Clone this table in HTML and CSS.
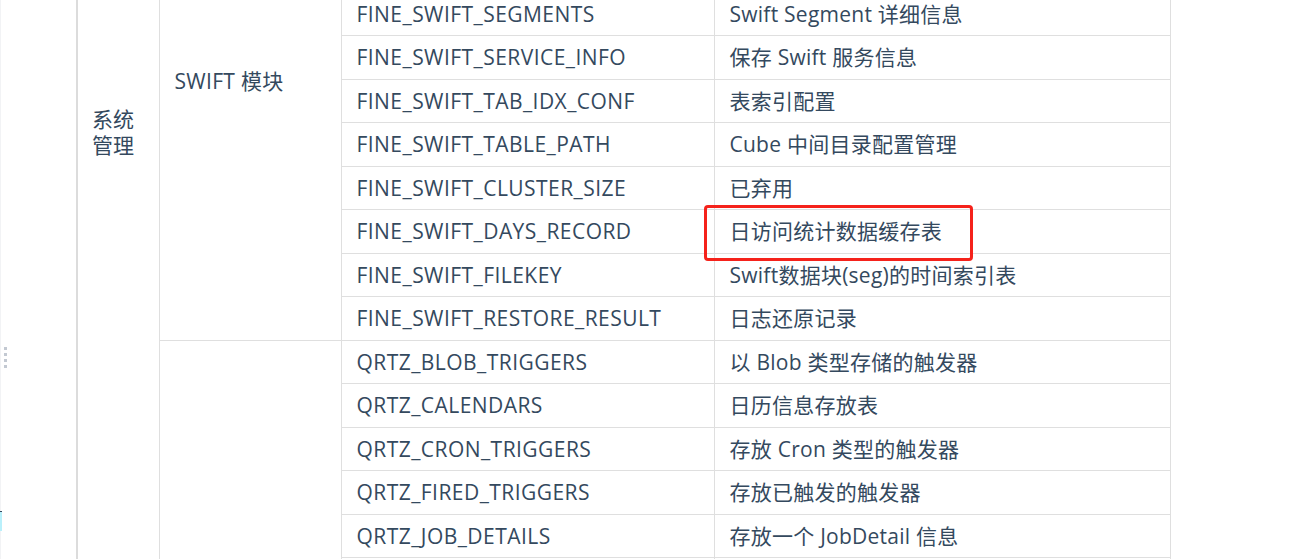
FILE: index.html
```html
<!DOCTYPE html>
<html lang="zh-CN">
<head>
  <meta charset="UTF-8">
  <title>系统管理 – 数据表说明</title>
  <link rel="stylesheet" href="styles.css">
</head>
<body>
  <div class="page">
    <div class="side-edge">
      <span class="resize-handle"><i></i><i></i><i></i><i></i></span>
      <span class="caret-mark"></span>
    </div>
    <div class="content">
      <table class="doc-table">
        <colgroup>
          <col class="c-group">
          <col class="c-module">
          <col class="c-name">
          <col class="c-desc">
        </colgroup>
        <tbody>
          <tr>
            <td class="span-cell group-cell" rowspan="14">系统管理</td>
            <td class="span-cell module-cell" rowspan="8">SWIFT 模块</td>
            <td class="name">FINE_SWIFT_SEGMENTS</td>
            <td class="desc">Swift Segment 详细信息</td>
          </tr>
          <tr><td class="name">FINE_SWIFT_SERVICE_INFO</td><td class="desc">保存 Swift 服务信息</td></tr>
          <tr><td class="name">FINE_SWIFT_TAB_IDX_CONF</td><td class="desc">表索引配置</td></tr>
          <tr><td class="name">FINE_SWIFT_TABLE_PATH</td><td class="desc">Cube 中间目录配置管理</td></tr>
          <tr><td class="name">FINE_SWIFT_CLUSTER_SIZE</td><td class="desc">已弃用</td></tr>
          <tr><td class="name">FINE_SWIFT_DAYS_RECORD</td><td class="desc marked">日访问统计数据缓存表</td></tr>
          <tr><td class="name">FINE_SWIFT_FILEKEY</td><td class="desc">Swift数据块(seg)的时间索引表</td></tr>
          <tr><td class="name">FINE_SWIFT_RESTORE_RESULT</td><td class="desc">日志还原记录</td></tr>
          <tr>
            <td class="span-cell" rowspan="6"></td>
            <td class="name">QRTZ_BLOB_TRIGGERS</td>
            <td class="desc">以 Blob 类型存储的触发器</td>
          </tr>
          <tr><td class="name">QRTZ_CALENDARS</td><td class="desc">日历信息存放表</td></tr>
          <tr><td class="name">QRTZ_CRON_TRIGGERS</td><td class="desc">存放 Cron 类型的触发器</td></tr>
          <tr><td class="name">QRTZ_FIRED_TRIGGERS</td><td class="desc">存放已触发的触发器</td></tr>
          <tr><td class="name">QRTZ_JOB_DETAILS</td><td class="desc">存放一个 JobDetail 信息</td></tr>
          <tr><td class="name"></td><td class="desc"></td></tr>
        </tbody>
      </table>
    </div>
  </div>
</body>
</html>
```

FILE: styles.css
```css
html, body {
  margin: 0;
  height: 100%;
  overflow: hidden;
  background: #fff;
}
body {
  font-family: "Open Sans", "Noto Sans CJK SC", sans-serif;
  font-size: 21px;
  color: #34495e;
}
.page {
  display: flex;
  height: 100%;
}
.side-edge {
  width: 1px;
  flex: none;
  background: #f2f3f5;
  position: relative;
}
.resize-handle {
  position: absolute; left: 4px; top: 347px;
  display: flex; flex-direction: column; gap: 3px;
}
.resize-handle i {
  display: block; width: 3px; height: 3px;
  background: #c3c9d2;
}
.caret-mark {
  position: absolute; left: 0; top: 511px;
  width: 2px; height: 19px;
  border-top: 1px solid #34495e;
  background: #b9f0fb;
}
.content {
  flex: 1;
  padding-left: 75px;
}
.doc-table {
  border-collapse: collapse;
  table-layout: fixed;
  width: 1093px;
  margin-top: -8.5px; /* page is scrolled */
  line-height: 26px;
}
.c-group  { width: 82px; }
.c-module { width: 182px; }
.c-name   { width: 373px; }
.c-desc   { width: 456px; }
.doc-table tr { height: 43.5px; }
.doc-table td {
  border: 1px solid #dfdfdf;
  padding: 0 15px;
  vertical-align: middle;
  white-space: nowrap;
}
.doc-table td.name { letter-spacing: .45px; }
.doc-table td.desc { letter-spacing: .25px; }
.doc-table td.group-cell {
  border-left: 2px solid #dcdcdc;
  white-space: normal;
  vertical-align: top;
  padding: 113px 14px 0 14px;
}
.doc-table td.module-cell {
  vertical-align: top;
  padding-top: 75px;
  letter-spacing: .3px;
}
.doc-table td.marked { position: relative; }
.doc-table td.marked::after {
  content: "";
  position: absolute;
  left: -11px; top: -5px;
  width: 263px; height: 50px;
  border: 3px solid #f5221b;
  border-radius: 4px;
}
```
